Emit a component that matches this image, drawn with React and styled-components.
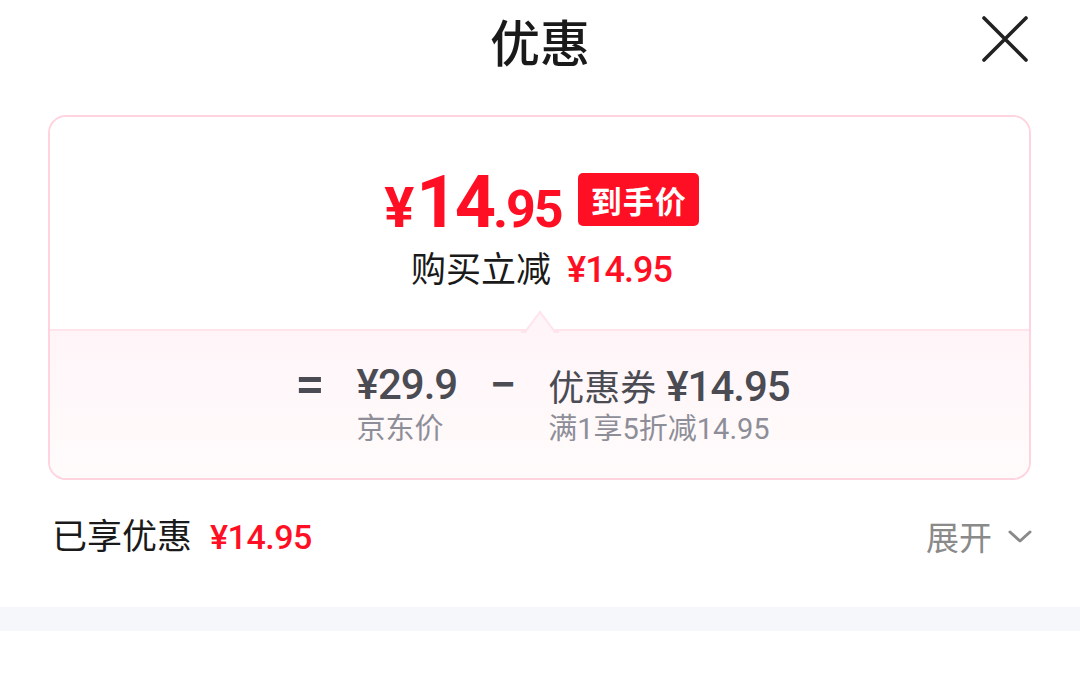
import React from "react";
import styled, { createGlobalStyle } from "styled-components";

const RED = "#ff0f23";
const NUM = `Roboto, "Noto Sans CJK SC", sans-serif`;
const CJK = `"Noto Sans CJK SC", "Noto Sans", sans-serif`;

const Global = createGlobalStyle`
  html, body { margin: 0; padding: 0; background: #ffffff; }
  body { font-family: ${CJK}; color: #1a1a1a; }
  * { box-sizing: border-box; }
`;

const Page = styled.div`
  width: 1080px;
  height: 674px;
  background: #fff;
  overflow: hidden;
`;

const Header = styled.div`
  height: 84px;
  display: grid;
  grid-template-columns: 1fr auto 1fr;
  align-items: center;
`;

const Title = styled.h1`
  grid-column: 2;
  margin: 0;
  font-size: 50px;
  line-height: 1;
  font-weight: 500;
  color: #1a1a1a;
  padding-bottom: 4px;
`;

const Close = styled.button`
  grid-column: 3;
  justify-self: end;
  align-self: start;
  margin-top: 16px;
  margin-right: 51px;
  width: 48px;
  height: 46px;
  padding: 0;
  border: 0;
  background: none;
  display: flex;
  align-items: center;
  justify-content: center;
`;

const Card = styled.div`
  margin: 31px 49px 0 48px;
  height: 365px;
  border: 2px solid #ffd4df;
  border-radius: 18px;
  overflow: hidden;
  display: flex;
  flex-direction: column;
`;

const Upper = styled.div`
  height: 212px;
  background: #fff;
  display: flex;
  flex-direction: column;
  align-items: center;
  padding-top: 54px;
  padding-left: 4px;
`;

const PriceRow = styled.div`
  display: flex;
  align-items: flex-start;
  gap: 16px;
  height: 58px;
`;

const BigPrice = styled.div`
  margin-top: -4px;
  display: flex;
  align-items: baseline;
  font-family: ${NUM};
  font-weight: 700;
  color: ${RED};
  line-height: 1;
`;

const Part = styled.span`
  font-size: ${(p) => p.$size}px;
  letter-spacing: ${(p) => p.$ls || 0}px;
  margin-right: ${(p) => p.$mr || 0}px;
`;

const Badge = styled.span`
  margin-top: 2px;
  height: 53px;
  padding: 0 12px 0 13px;
  border-radius: 5px;
  background: ${RED};
  color: #fff;
  font-size: 31px;
  font-weight: 700;
  display: flex;
  align-items: center;
  letter-spacing: 1px;
`;

const SubLine = styled.div`
  margin-top: 20px;
  display: flex;
  align-items: baseline;
  gap: 16px;
  font-size: 35px;
  line-height: 1;
  color: #1a1a1a;
`;

const RedNum = styled.span`
  font-family: ${NUM};
  font-weight: 500;
  color: ${RED};
  font-size: ${(p) => p.$size}px;
  letter-spacing: ${(p) => p.$ls || 0}px;
`;

const Lower = styled.div`
  position: relative;
  flex: 1;
  border-top: 2px solid #ffe4ec;
  background: linear-gradient(180deg, #fff5f8 0%, #fffbfb 100%);
  display: flex;
  justify-content: center;
  align-items: center;
  padding-left: 6px;
`;

const Notch = styled.svg`
  position: absolute;
  top: -23px;
  left: 50%;
  margin-left: -19px;
`;

const Formula = styled.div`
  display: flex;
  align-items: flex-start;
  gap: 32px;
  margin-top: -2px;
`;

const Op = styled.span`
  font-family: ${NUM};
  font-size: ${(p) => p.$size}px;
  font-weight: 500;
  line-height: 46px;
  color: #4a4b53;
`;

const Col = styled.div`
  display: flex;
  flex-direction: column;
  align-items: flex-start;
`;

const MainLine = styled.div`
  display: flex;
  align-items: baseline;
  gap: 10px;
  height: 46px;
  font-size: 36px;
  color: #4a4b53;
  line-height: 46px;
`;

const DarkNum = styled.span`
  font-family: ${NUM};
  font-weight: 500;
  font-size: 42px;
  letter-spacing: -1px;
`;

const Note = styled.div`
  margin-top: 4px;
  font-size: 29px;
  line-height: 34px;
  color: #8d8e98;
  font-family: ${NUM};
`;

const Footer = styled.div`
  height: 112px;
  display: flex;
  align-items: center;
  justify-content: space-between;
  padding: 0 48px 3px 52px;
`;

const Enjoy = styled.div`
  display: flex;
  align-items: baseline;
  gap: 18px;
  font-size: 35px;
  color: #1a1a1a;
  line-height: 1;
`;

const Expand = styled.button`
  border: 0;
  background: none;
  padding: 0;
  display: flex;
  align-items: center;
  gap: 16px;
  font-family: ${CJK};
  font-size: 33px;
  color: #8a8a8a;
  line-height: 1;
  margin-top: 4px;
`;

const Band = styled.div`
  margin-top: 15px;
  height: 24px;
  background: #f6f7fb;
`;

export default function App() {
  return (
    <Page>
      <Global />
      <Header>
        <Title>优惠</Title>
        <Close aria-label="close">
          <svg width="46" height="46" viewBox="0 0 46 46">
            <path d="M2 2 L44 44 M44 2 L2 44" stroke="#222" strokeWidth="3.6" strokeLinecap="round" />
          </svg>
        </Close>
      </Header>
      <Card>
        <Upper>
          <PriceRow>
            <BigPrice>
              <Part $size={56} $mr={2}>¥</Part>
              <Part $size={72} $ls={-3}>14</Part>
              <Part $size={52} $ls={-2}>.95</Part>
            </BigPrice>
            <Badge>到手价</Badge>
          </PriceRow>
          <SubLine>
            <span>购买立减</span>
            <RedNum $size={36} $ls={-1}>¥14.95</RedNum>
          </SubLine>
        </Upper>
        <Lower>
          <Notch width="38" height="25" viewBox="0 0 38 25">
            <path d="M0 24 L4 24 L19 4 L34 24 L38 24 L38 25 L0 25 Z" fill="#fff5f8" />
            <path d="M0 24 L4 24 L19 4 L34 24 L38 24" fill="none" stroke="#ffe4ec" strokeWidth="2" />
          </Notch>
          <Formula>
            <Op $size={52}>=</Op>
            <Col>
              <MainLine><DarkNum>¥29.9</DarkNum></MainLine>
              <Note>京东价</Note>
            </Col>
            <Op $size={48}>−</Op>
            <Col>
              <MainLine>
                <span>优惠券</span>
                <DarkNum>¥14.95</DarkNum>
              </MainLine>
              <Note>满1享5折减14.95</Note>
            </Col>
          </Formula>
        </Lower>
      </Card>
      <Footer>
        <Enjoy>
          <span>已享优惠</span>
          <RedNum $size={34} $ls={-0.5}>¥14.95</RedNum>
        </Enjoy>
        <Expand>
          <span>展开</span>
          <svg width="24" height="14" viewBox="0 0 24 14">
            <path d="M2 2 L12 11 L22 2" fill="none" stroke="#8a8a8a" strokeWidth="3" strokeLinecap="round" strokeLinejoin="round" />
          </svg>
        </Expand>
      </Footer>
      <Band />
    </Page>
  );
}
